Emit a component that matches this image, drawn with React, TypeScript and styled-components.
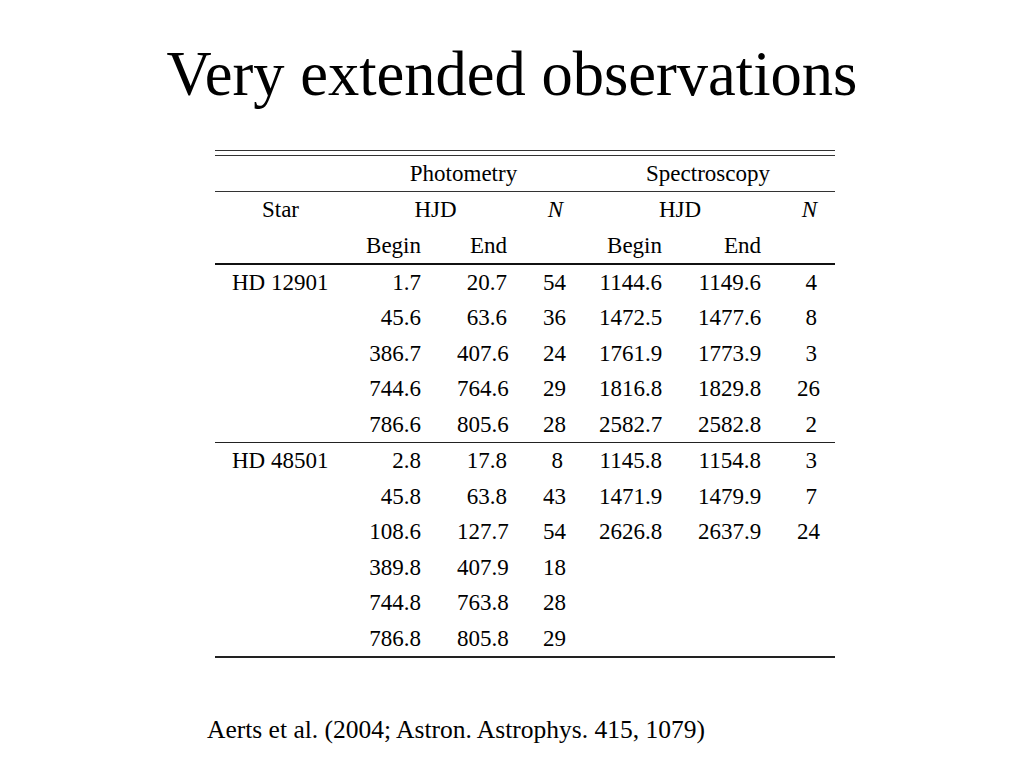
import styled, { createGlobalStyle } from "styled-components";

const GlobalStyle = createGlobalStyle`
  html, body {
    margin: 0;
    padding: 0;
    background: #fff;
  }
  body {
    font-family: "Liberation Serif", "Times New Roman", serif;
    color: #000;
  }
`;

type Group = {
    star: string;
    rows: string[][];
};

const groups: Group[] = [
    {
        star: "HD 12901",
        rows: [
            ["1.7", "20.7", "54", "1144.6", "1149.6", "4"],
            ["45.6", "63.6", "36", "1472.5", "1477.6", "8"],
            ["386.7", "407.6", "24", "1761.9", "1773.9", "3"],
            ["744.6", "764.6", "29", "1816.8", "1829.8", "26"],
            ["786.6", "805.6", "28", "2582.7", "2582.8", "2"],
        ],
    },
    {
        star: "HD 48501",
        rows: [
            ["2.8", "17.8", "8", "1145.8", "1154.8", "3"],
            ["45.8", "63.8", "43", "1471.9", "1479.9", "7"],
            ["108.6", "127.7", "54", "2626.8", "2637.9", "24"],
            ["389.8", "407.9", "18", "", "", ""],
            ["744.8", "763.8", "28", "", "", ""],
            ["786.8", "805.8", "29", "", "", ""],
        ],
    },
];

const colWidths = [131, 93, 86, 56, 99, 99, 56];

const App = () => {
    return (
        <>
            <GlobalStyle />
            <Slide>
                <Title>Very extended observations</Title>
                <TableFrame>
                    <Table>
                        <colgroup>
                            {colWidths.map((w, i) => (
                                <Col key={i} $w={w} />
                            ))}
                        </colgroup>
                        <thead>
                            <tr>
                                <Cell $lh={35} />
                                <Cell colSpan={3} $lh={35} $align="center" $rule>
                                    Photometry
                                </Cell>
                                <Cell colSpan={3} $lh={35} $align="center" $rule>
                                    Spectroscopy
                                </Cell>
                            </tr>
                            <tr>
                                <Cell $lh={36} $align="center" $rule>
                                    Star
                                </Cell>
                                <Cell colSpan={2} $lh={36} $align="center" $rule>
                                    HJD
                                </Cell>
                                <Cell $lh={36} $rule>
                                    <Italic>N</Italic>
                                </Cell>
                                <Cell colSpan={2} $lh={36} $align="center" $rule>
                                    HJD
                                </Cell>
                                <Cell $lh={36} $rule>
                                    <Italic>N</Italic>
                                </Cell>
                            </tr>
                            <tr>
                                <Cell $lh={35} />
                                <Cell $lh={35}>Begin</Cell>
                                <Cell $lh={35}>End</Cell>
                                <Cell $lh={35} />
                                <Cell $lh={35}>Begin</Cell>
                                <Cell $lh={35}>End</Cell>
                                <Cell $lh={35} />
                            </tr>
                        </thead>
                        {groups.map((g, gi) => (
                            <Body key={g.star} $first={gi === 0}>
                                {g.rows.map((r, ri) => (
                                    <tr key={ri}>
                                        <Cell $align="left">
                                            {ri === 0 ? g.star : ""}
                                        </Cell>
                                        {r.map((v, ci) => (
                                            <Cell key={ci}>{v}</Cell>
                                        ))}
                                    </tr>
                                ))}
                            </Body>
                        ))}
                    </Table>
                </TableFrame>
                <Caption>Aerts et al. (2004; Astron. Astrophys. 415, 1079)</Caption>
            </Slide>
        </>
    );
};

export default App;

const Slide = styled.div`
    width: 1024px;
    height: 768px;
    box-sizing: border-box;
    padding-top: 43px;
    display: flex;
    flex-direction: column;
    overflow: hidden;
`;

const Title = styled.h1`
    margin: 0;
    font-size: 62.5px;
    font-weight: normal;
    line-height: 1;
    text-align: center;
    white-space: nowrap;
`;

const TableFrame = styled.div`
    margin: 44px 0 0 215px;
    width: 620px;
    border-top: 1px solid #333;
    padding-top: 4px;
`;

const Table = styled.table`
    width: 620px;
    table-layout: fixed;
    border-collapse: collapse;
    border-spacing: 0;
    border-top: 1px solid #333;
    border-bottom: 2px solid #222;
    font-size: 23px;
`;

const Col = styled.col<{ $w: number }>`
    width: ${(p) => p.$w}px;
`;

const Body = styled.tbody<{ $first: boolean }>`
    border-top: ${(p) => (p.$first ? "2px solid #111" : "1px solid #222")};
`;

const Cell = styled.td<{
    $align?: "left" | "center" | "right";
    $rule?: boolean;
    $lh?: number;
}>`
    padding: 0 18px 0 ${(p) => (p.$align === "left" ? "17px" : "18px")};
    line-height: ${(p) => p.$lh ?? 35.5}px;
    text-align: ${(p) => p.$align ?? "right"};
    vertical-align: middle;
    white-space: nowrap;
    border-top: ${(p) => (p.$rule ? "1px solid #333" : "none")};
`;

const Italic = styled.i`
    font-style: italic;
`;

const Caption = styled.div`
    margin: 59px 0 0 207px;
    font-size: 25.5px;
    line-height: 1;
    white-space: nowrap;
`;
